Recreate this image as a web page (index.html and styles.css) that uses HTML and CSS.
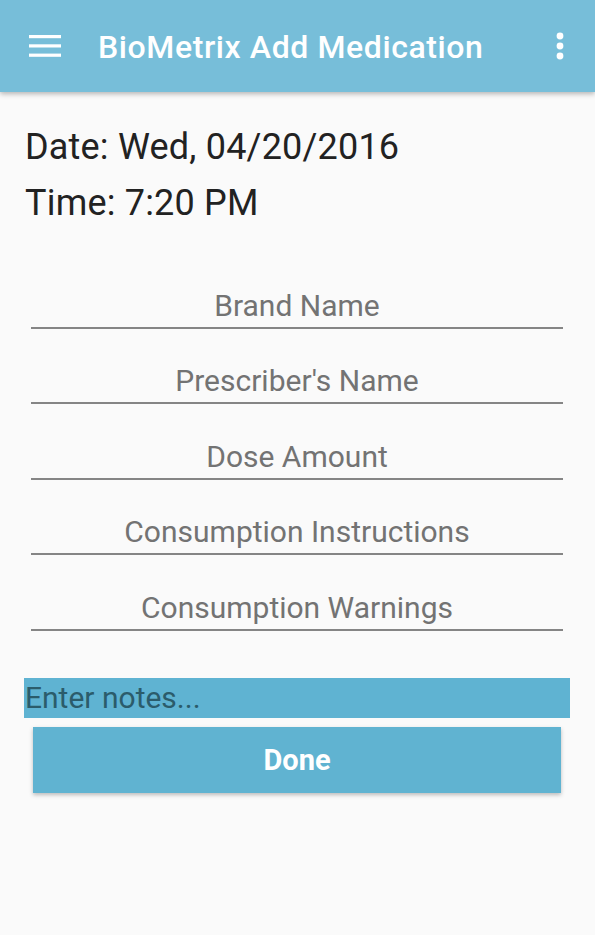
FILE: index.html
```html
<!DOCTYPE html>
<html>
<head>
<meta charset="utf-8">
<link rel="stylesheet" href="styles.css">
</head>
<body>
<header class="appbar">
  <svg class="menu" width="32" height="24" viewBox="0 0 32 24">
    <rect x="0" y="1" width="32" height="3.2" fill="#fff"/>
    <rect x="0" y="10.3" width="32" height="3.2" fill="#fff"/>
    <rect x="0" y="19.6" width="32" height="3.2" fill="#fff"/>
  </svg>
  <div class="title">BioMetrix Add Medication</div>
  <svg class="more" width="8" height="28" viewBox="0 0 8 28">
    <circle cx="4" cy="4" r="3.4" fill="#fff"/>
    <circle cx="4" cy="14" r="3.4" fill="#fff"/>
    <circle cx="4" cy="24" r="3.4" fill="#fff"/>
  </svg>
</header>
<main class="content">
  <div class="datetime">
    <div class="line">Date: Wed, 04/20/2016</div>
    <div class="line">Time: 7:20 PM</div>
  </div>
  <div class="fields">
    <div class="field">Brand Name</div>
    <div class="field">Prescriber's Name</div>
    <div class="field">Dose Amount</div>
    <div class="field">Consumption Instructions</div>
    <div class="field">Consumption Warnings</div>
  </div>
  <div class="notes">Enter notes...</div>
  <div class="done">Done</div>
</main>
</body>
</html>
```
FILE: styles.css
```css
html, body {
  margin: 0;
  padding: 0;
}
body {
  background: #fafafa;
  font-family: Roboto, "Noto Sans", sans-serif;
  width: 595px;
  height: 935px;
  overflow: hidden;
}
.appbar {
  height: 92px;
  background: #77bed9;
  display: flex;
  align-items: center;
  box-shadow: 0 2px 5px rgba(0,0,0,0.28);
  position: relative;
  z-index: 1;
}
.menu {
  margin-left: 29px;
  margin-top: 0;
  flex: none;
}
.title {
  margin-left: 37px;
  color: #fff;
  font-size: 32px;
  letter-spacing: 0.6px;
  font-weight: 500;
  flex: 1;
  margin-top: 1px;
}
.more {
  margin-right: 31px;
  margin-top: 0;
  flex: none;
}
.content {
  padding-top: 27px;
}
.datetime {
  padding-left: 25px;
}
.line {
  font-size: 36px;
  letter-spacing: 0.2px;
  line-height: 56px;
  color: #222;
}
.fields {
  margin: 22px 32px 0 31px;
}
.field {
  padding-top: 34.5px;
  padding-bottom: 3px;
  line-height: 36px;
  font-size: 30px;
  color: #737373;
  text-align: center;
  border-bottom: 2px solid #858585;
}
.notes {
  margin: 47px 25px 0 24px;
  height: 40px;
  line-height: 40px;
  background: #5fb3d2;
  color: #2b5c6b;
  font-size: 30px;
  padding-left: 1px;
}
.done {
  margin: 9px 34px 0 33px;
  height: 66px;
  line-height: 66px;
  background: #60b3d1;
  color: #fff;
  font-size: 29px;
  font-weight: 700;
  text-align: center;
  box-shadow: 0 2px 4px rgba(0,0,0,0.25);
}
```
